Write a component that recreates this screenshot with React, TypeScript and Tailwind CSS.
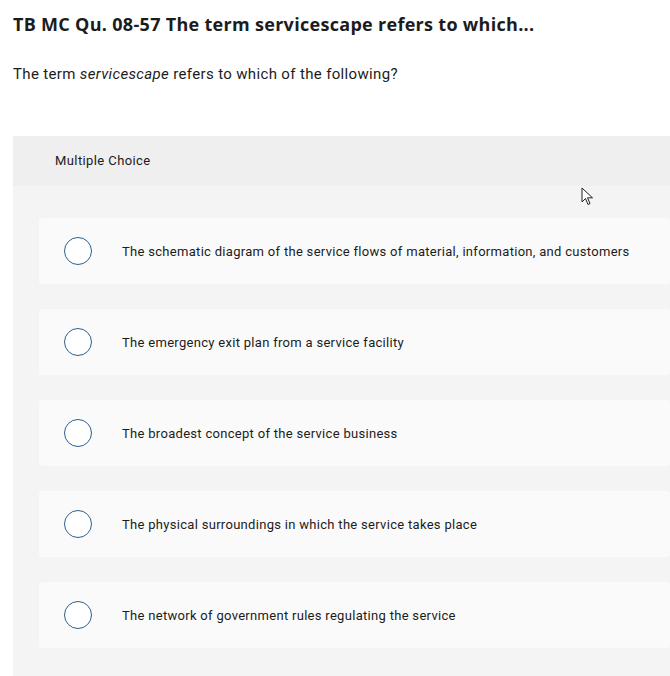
const options = [
  'The schematic diagram of the service flows of material, information, and customers',
  'The emergency exit plan from a service facility',
  'The broadest concept of the service business',
  'The physical surroundings in which the service takes place',
  'The network of government rules regulating the service',
]

export default function App() {
  return (
    <div className="relative h-[676px] w-[670px] overflow-hidden bg-white text-[#1c1c1c] font-['Roboto',sans-serif]">
      <h1 className="pl-[13px] pt-[12px] font-['Open_Sans',sans-serif] text-[18px] font-bold leading-[24px] tracking-[0.3px]">
        TB MC Qu. 08-57 The term servicescape refers to which...
      </h1>
      <p className="pl-[13px] pt-[28px] text-[15px] leading-[20px] tracking-[0.35px]">
        The term <em>servicescape</em> refers to which of the following?
      </p>
      <div className="ml-[13px] mt-[52px] bg-[#f4f4f4] pb-8">
        <div className="flex h-[50px] items-center bg-[#efefef] pl-[42px] text-[13px] tracking-[0.4px]">Multiple Choice</div>
        <div className="flex flex-col gap-[25px] pl-[26px] pt-[32px]">
          {options.map((text) => (
            <div key={text} className="flex h-[66px] items-center rounded-[3px] bg-[#fafafa] pl-[25px]">
              <span className="h-[28px] w-[28px] shrink-0 rounded-full border-[1.5px] border-[#2f5f8c] bg-white"></span>
              <span className="pl-[30px] pt-[1px] text-[13px] tracking-[0.3px]">{text}</span>
            </div>
          ))}
        </div>
      </div>
      <svg className="absolute left-[581px] top-[187px]" width="13" height="19" viewBox="0 0 13 19">
        <path d="M1 1 L1 15 L4.5 11.5 L7 17.5 L9 16.5 L6.5 10.8 L11.5 10.8 Z" fill="white" stroke="#222" strokeWidth="1" strokeLinejoin="round" />
      </svg>
    </div>
  )
}
